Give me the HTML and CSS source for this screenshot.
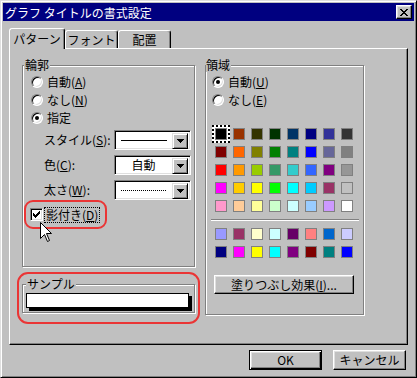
FILE: index.html
```html
<!DOCTYPE html>
<html lang="ja">
<head>
    <meta charset="UTF-8">
    <title>グラフ タイトルの書式設定</title>
    <link rel="stylesheet" href="styles.css">
</head>
<body>
<div class="window">
    <div class="titlebar">
        <span class="title">グラフ タイトルの書式設定</span>
        <span class="close-btn">
            <svg width="8" height="7" viewBox="0 0 8 7"><path d="M0 0h2v1H0zM6 0h2v1H6zM1 1h2v1H1zM5 1h2v1H5zM2 2h4v1H2zM3 3h2v1H3zM2 4h4v1H2zM1 5h2v1H1zM5 5h2v1H5zM0 6h2v1H0zM6 6h2v1H6z" fill="#000"/></svg>
        </span>
    </div>

    <div class="dialog-body">
        <div class="tabs">
            <div class="tab active">パターン</div>
            <div class="tab tab-font">フォント</div>
            <div class="tab tab-align">配置</div>
        </div>

        <div class="panel">
            <!-- left column: outline + sample -->
            <div class="col-left">
                <div class="group outline">
                    <div class="legend">輪郭</div>
                    <div class="radio-list">
                        <div class="radio-row"><span class="radio"></span>自動(<u>A</u>)</div>
                        <div class="radio-row"><span class="radio"></span>なし(<u>N</u>)</div>
                        <div class="radio-row"><span class="radio on"></span>指定</div>
                    </div>

                    <div class="combo-list">
                        <div class="combo-row">
                            <span class="combo-label">スタイル(<u>S</u>):</span>
                            <div class="combo">
                                <div class="combo-value"><span class="line-solid"></span></div>
                                <span class="drop-btn"><svg width="7" height="4" viewBox="0 0 7 4"><path d="M0 0h7v1H0zM1 1h5v1H1zM2 2h3v1H2zM3 3h1v1H3z" fill="#000"/></svg></span>
                            </div>
                        </div>
                        <div class="combo-row">
                            <span class="combo-label">色(<u>C</u>):</span>
                            <div class="combo">
                                <div class="combo-value">自動</div>
                                <span class="drop-btn"><svg width="7" height="4" viewBox="0 0 7 4"><path d="M0 0h7v1H0zM1 1h5v1H1zM2 2h3v1H2zM3 3h1v1H3z" fill="#000"/></svg></span>
                            </div>
                        </div>
                        <div class="combo-row">
                            <span class="combo-label">太さ(<u>W</u>):</span>
                            <div class="combo">
                                <div class="combo-value"><span class="line-dotted"></span></div>
                                <span class="drop-btn"><svg width="7" height="4" viewBox="0 0 7 4"><path d="M0 0h7v1H0zM1 1h5v1H1zM2 2h3v1H2zM3 3h1v1H3z" fill="#000"/></svg></span>
                            </div>
                        </div>
                    </div>

                    <div class="highlight check-hl">
                        <span class="checkbox">
                            <svg width="7" height="7" viewBox="0 0 7 7"><path d="M6 0h1v1H6zM5 1h2v1H5zM0 2h1v1H0zM4 2h3v1H4zM0 3h2v1H0zM3 3h3v1H3zM0 4h5v1H0zM1 5h3v1H1zM2 6h1v1H2z" fill="#000"/></svg>
                        </span>
                        <span class="focus-text">影付き(<u>D</u>)</span>
                    </div>

                    <svg class="cursor" width="13" height="21" viewBox="0 0 13 21">
                        <path d="M0.5 0.5V16.5L4.5 12.5L7.5 19.5L9.5 18.5L6.5 11.5H11.5Z" fill="#fff" stroke="#000" stroke-width="1"/>
                    </svg>
                </div>

                <div class="highlight sample-hl">
                    <div class="group sample-group">
                        <div class="legend legend-sample">サンプル</div>
                        <div class="sample-box"></div>
                    </div>
                </div>
            </div>

            <!-- right column: area -->
            <div class="col-right">
                <div class="group area">
                    <div class="legend legend-area">領域</div>
                    <div class="radio-list area-radios">
                        <div class="radio-row"><span class="radio on"></span>自動(<u>U</u>)</div>
                        <div class="radio-row"><span class="radio"></span>なし(<u>E</u>)</div>
                    </div>

                    <div class="swatches">
                        <span class="swatch selected" style="background:#000000"></span>
                        <span class="swatch" style="background:#993300"></span>
                        <span class="swatch" style="background:#333300"></span>
                        <span class="swatch" style="background:#003300"></span>
                        <span class="swatch" style="background:#003366"></span>
                        <span class="swatch" style="background:#000080"></span>
                        <span class="swatch" style="background:#333399"></span>
                        <span class="swatch" style="background:#333333"></span>

                        <span class="swatch" style="background:#800000"></span>
                        <span class="swatch" style="background:#ff6600"></span>
                        <span class="swatch" style="background:#808000"></span>
                        <span class="swatch" style="background:#008000"></span>
                        <span class="swatch" style="background:#008080"></span>
                        <span class="swatch" style="background:#0000ff"></span>
                        <span class="swatch" style="background:#666699"></span>
                        <span class="swatch" style="background:#808080"></span>

                        <span class="swatch" style="background:#ff0000"></span>
                        <span class="swatch" style="background:#ff9900"></span>
                        <span class="swatch" style="background:#99cc00"></span>
                        <span class="swatch" style="background:#339966"></span>
                        <span class="swatch" style="background:#33cccc"></span>
                        <span class="swatch" style="background:#3366ff"></span>
                        <span class="swatch" style="background:#800080"></span>
                        <span class="swatch" style="background:#969696"></span>

                        <span class="swatch" style="background:#ff00ff"></span>
                        <span class="swatch" style="background:#ffcc00"></span>
                        <span class="swatch" style="background:#ffff00"></span>
                        <span class="swatch" style="background:#00ff00"></span>
                        <span class="swatch" style="background:#00ffff"></span>
                        <span class="swatch" style="background:#00ccff"></span>
                        <span class="swatch" style="background:#993366"></span>
                        <span class="swatch" style="background:#c0c0c0"></span>

                        <span class="swatch" style="background:#ff99cc"></span>
                        <span class="swatch" style="background:#ffcc99"></span>
                        <span class="swatch" style="background:#ffff99"></span>
                        <span class="swatch" style="background:#ccffcc"></span>
                        <span class="swatch" style="background:#ccffff"></span>
                        <span class="swatch" style="background:#99ccff"></span>
                        <span class="swatch" style="background:#cc99ff"></span>
                        <span class="swatch" style="background:#ffffff"></span>
                    </div>

                    <div class="separator"></div>

                    <div class="swatches swatches-chart">
                        <span class="swatch" style="background:#9999ff"></span>
                        <span class="swatch" style="background:#993366"></span>
                        <span class="swatch" style="background:#ffffcc"></span>
                        <span class="swatch" style="background:#ccffff"></span>
                        <span class="swatch" style="background:#660066"></span>
                        <span class="swatch" style="background:#ff8080"></span>
                        <span class="swatch" style="background:#0066cc"></span>
                        <span class="swatch" style="background:#ccccff"></span>

                        <span class="swatch" style="background:#000080"></span>
                        <span class="swatch" style="background:#ff00ff"></span>
                        <span class="swatch" style="background:#ffff00"></span>
                        <span class="swatch" style="background:#00ffff"></span>
                        <span class="swatch" style="background:#800080"></span>
                        <span class="swatch" style="background:#800000"></span>
                        <span class="swatch" style="background:#008080"></span>
                        <span class="swatch" style="background:#0000ff"></span>
                    </div>

                    <button class="btn btn-fill">塗りつぶし効果(<u>I</u>)...</button>
                </div>
            </div>
        </div>

        <div class="actions">
            <button class="btn btn-dialog default">OK</button>
            <button class="btn btn-dialog">キャンセル</button>
        </div>
    </div>
</div>
</body>
</html>
```

FILE: styles.css
```css
/* Base */
* {
    box-sizing: border-box;
}

body {
    margin: 0;
    font-family: "Noto Sans CJK JP", "Liberation Sans", sans-serif;
    font-size: 12px;
    line-height: 14px;
    color: #000;
    background: #c0c0c0;
}

u {
    text-decoration: underline;
    text-underline-offset: 1px;
}

/* Window frame */
.window {
    position: relative;
    width: 417px;
    height: 378px;
    padding: 1px;
    background: #c0c0c0;
    border: 1px solid;
    border-color: #dfdfdf #000 #000 #dfdfdf;
    box-shadow: inset 1px 1px #fff, inset -1px -1px #808080;
}

.titlebar {
    display: flex;
    align-items: center;
    justify-content: space-between;
    height: 18px;
    margin: 1px 1px 0;
    padding: 0 2px;
    background: #000080;
    color: #fff;
}

.title {
    padding-top: 1px;
}

.close-btn {
    display: flex;
    align-items: center;
    justify-content: center;
    width: 16px;
    height: 14px;
    background: #c0c0c0;
    border: 1px solid;
    border-color: #fff #000 #000 #fff;
    box-shadow: inset -1px -1px #808080, inset 1px 1px #dfdfdf;
}

.close-btn svg {
    display: block;
}

.dialog-body {
    padding: 7px 7px 0;
}

/* Tabs */
.tabs {
    display: flex;
    align-items: flex-end;
    height: 20px;
}

.tab {
    width: 53px;
    height: 18px;
    text-align: center;
    line-height: 17px;
    background: #c0c0c0;
    border: 1px solid;
    border-bottom: none;
    border-color: #fff #000 transparent #fff;
    border-radius: 3px 3px 0 0;
    box-shadow: inset -1px 0 #808080;
}

.tab.active {
    position: relative;
    z-index: 1;
    width: 56px;
    height: 21px;
    margin-bottom: -1px;
    line-height: 19px;
}

/* Tab panel */
.panel {
    display: flex;
    gap: 10px;
    height: 297px;
    padding: 16px 0 0 12px;
    border: 1px solid;
    border-color: #fff #000 #000 #fff;
    box-shadow: inset -1px -1px #808080;
}

.col-left {
    width: 173px;
}

.col-right {
    width: 159px;
}

/* Group boxes */
.group {
    position: relative;
    border: 1px solid #808080;
    box-shadow: 1px 1px 0 #fff, inset 1px 1px 0 #fff;
}

.legend {
    width: fit-content;
    margin: -8px 0 0 1px;
    padding: 0 1px;
    background: #c0c0c0;
}

.legend-sample {
    margin-left: 3px;
}

.legend-area {
    margin-left: 0;
    padding-left: 0;
}

.outline {
    height: 202px;
}

.area {
    height: 250px;
}

/* Radio buttons */
.radio-list {
    margin-top: 1px;
    padding-left: 8px;
}

.area-radios {
    padding-left: 6px;
}

.radio-row {
    display: flex;
    align-items: center;
    height: 18px;
}

.radio {
    position: relative;
    width: 12px;
    height: 12px;
    margin-right: 4px;
    border-radius: 50%;
    background: #fff;
    border: 1px solid;
    border-color: #808080 #fff #fff #808080;
    box-shadow: inset 1px 1px #000, inset -1px -1px #dfdfdf;
}

.radio.on::after {
    content: "";
    position: absolute;
    left: 3px;
    top: 3px;
    width: 4px;
    height: 4px;
    border-radius: 50%;
    background: #000;
}

/* Combo boxes */
.combo-list {
    display: flex;
    flex-direction: column;
    gap: 5px;
    margin-top: 3px;
    padding-left: 21px;
}

.combo-row {
    display: flex;
    align-items: center;
    height: 20px;
}

.combo-label {
    width: 70px;
}

.combo {
    display: flex;
    width: 77px;
    height: 20px;
    padding: 2px;
    background: #fff;
    border: 1px solid;
    border-color: #808080 #fff #fff #808080;
    box-shadow: inset 1px 1px #000, inset -1px -1px #dfdfdf;
}

.combo-value {
    flex: 1;
    display: flex;
    align-items: center;
    justify-content: center;
    padding-right: 2px;
}

.line-solid,
.line-dotted {
    display: block;
    width: 46px;
    height: 1px;
    background: #000;
}

.line-dotted {
    background: repeating-linear-gradient(90deg, #000 0 1px, transparent 1px 2px);
}

.drop-btn {
    display: flex;
    align-items: center;
    justify-content: center;
    width: 16px;
    height: 16px;
    background: #c0c0c0;
    border: 1px solid;
    border-color: #dfdfdf #000 #000 #dfdfdf;
    box-shadow: inset 1px 1px #fff, inset -1px -1px #808080;
}

.drop-btn svg {
    display: block;
}

/* Red highlights */
.highlight {
    border: 2px solid #ea3535;
    border-radius: 9px;
}

.check-hl {
    display: flex;
    align-items: center;
    width: 83px;
    height: 29px;
    margin-left: 1px;
    padding-left: 4px;
}

.checkbox {
    display: flex;
    align-items: center;
    justify-content: center;
    width: 13px;
    height: 13px;
    margin-right: 2px;
    background: #fff;
    border: 1px solid;
    border-color: #808080 #fff #fff #808080;
    box-shadow: inset 1px 1px #000, inset -1px -1px #dfdfdf;
}

.checkbox svg {
    display: block;
}

.focus-text {
    padding: 0 1px;
    outline: 1px dotted #000;
}

.cursor {
    position: absolute;
    left: 17px;
    top: 156px;
    display: block;
}

.sample-hl {
    width: 183px;
    margin: 5px 0 0 -5px;
    padding: 10px 1px 9px 3px;
    border-radius: 11px;
}

.sample-group {
    width: 173px;
    height: 29px;
}

.sample-box {
    width: 163px;
    height: 15px;
    margin: 2px 0 0 3px;
    background: #fff;
    border: 1px solid #000;
    box-shadow: 3px 3px 0 #000;
}

/* Colour palette */
.swatches {
    display: grid;
    grid-template-columns: repeat(8, 12px);
    grid-auto-rows: 12px;
    gap: 6px;
    margin: 19px 0 0 9px;
}

.swatches-chart {
    margin-top: 7px;
}

.swatch {
    display: block;
    border: 1px solid #808080;
}

.swatch.selected {
    box-shadow: 0 0 0 3px #fff;
    outline: 2px dotted #000;
    outline-offset: 1px;
}

.separator {
    width: 148px;
    height: 2px;
    margin: 7px 0 0 5px;
    border-top: 1px solid #808080;
    border-bottom: 1px solid #fff;
}

/* Buttons */
.btn {
    display: block;
    padding: 0;
    font: inherit;
    line-height: 14px;
    color: #000;
    text-align: center;
    background: #c0c0c0;
    border: 1px solid;
    border-color: #fff #000 #000 #fff;
    box-shadow: inset -1px -1px #808080, inset 1px 1px #dfdfdf;
}

.btn-fill {
    width: 140px;
    height: 19px;
    margin: 17px 0 0 8px;
}

.actions {
    display: flex;
    justify-content: flex-end;
    gap: 11px;
    margin: 5px 2px 0 0;
}

.btn-dialog {
    width: 73px;
    height: 20px;
}

.btn.default {
    border-color: #000;
    box-shadow: inset 1px 1px #fff, inset -1px -1px #000, inset -2px -2px #808080, inset 2px 2px #dfdfdf;
}
```
